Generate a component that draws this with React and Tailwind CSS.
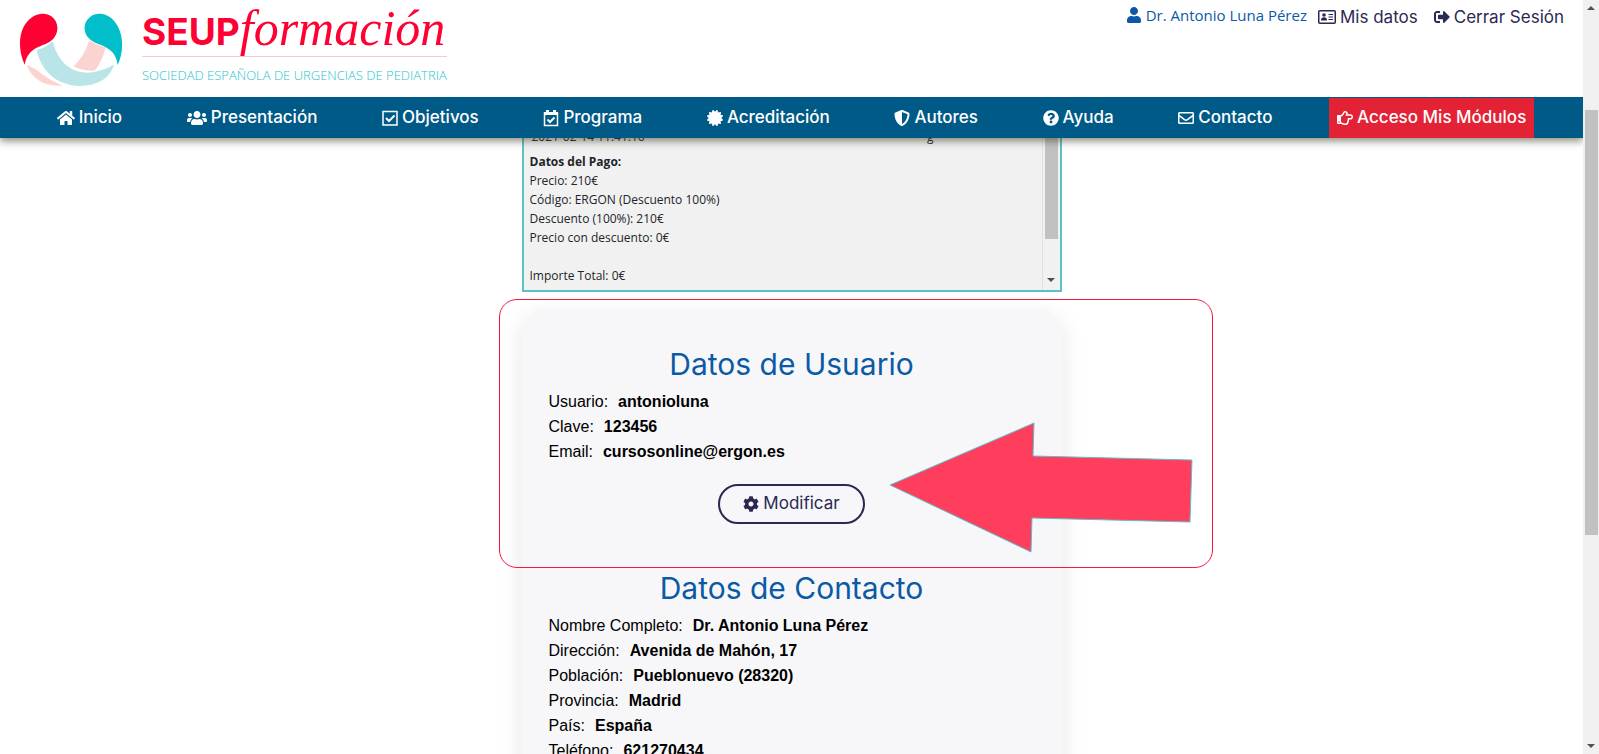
import React from 'react';
import {
  FaHome, FaUsers, FaCertificate, FaShieldAlt, FaQuestionCircle,
  FaRegEnvelope, FaRegHandPointRight, FaUser, FaSignOutAlt, FaCog,
} from 'react-icons/fa';

// iconos de esquinas rectas
const IconoCheck = ({ className }) => (
  <svg viewBox="0 0 16 16" fill="none" stroke="currentColor" className={className} aria-hidden="true">
    <path strokeWidth="1.5" d="M1 1.5H15V15H1Z" />
    <path strokeWidth="2" d="M4 8L7 11L12.5 5.5" />
  </svg>
);

const IconoCalendario = ({ className }) => (
  <svg viewBox="0 0 16 18" fill="none" stroke="currentColor" className={className} aria-hidden="true">
    <path strokeWidth="1.5" d="M1.5 4H14.5V16.5H1.5Z" />
    <path fill="currentColor" stroke="none" d="M1 3H3V1H6V3H10V1H13V3H15V6H1Z" />
    <path strokeWidth="2" d="M4.5 10.5L7 13L11.5 8.5" />
  </svg>
);

const IconoFicha = ({ className }) => (
  <svg viewBox="0 0 18 14" fill="none" stroke="currentColor" className={className} aria-hidden="true">
    <rect x="0.75" y="0.75" width="16.5" height="12.5" rx="1" strokeWidth="1.5" />
    <circle cx="6" cy="5" r="1.8" fill="currentColor" stroke="none" />
    <path fill="currentColor" stroke="none" d="M3 10.5C3 8 4 7.2 6 7.2S9 8 9 10.5Z" />
    <path strokeWidth="1.2" d="M10.5 4.5H15M10.5 7H15M10.5 9.5H15" />
  </svg>
);

const menu = [
  { label: 'Inicio', icon: FaHome, size: 'w-[18px] h-[18px]' },
  { label: 'Presentación', icon: FaUsers, size: 'w-5 h-5' },
  { label: 'Objetivos', icon: IconoCheck, size: 'w-4 h-4' },
  { label: 'Programa', icon: IconoCalendario, size: 'w-4 h-[18px]' },
  { label: 'Acreditación', icon: FaCertificate, size: 'w-4 h-4' },
  { label: 'Autores', icon: FaShieldAlt, size: 'w-4 h-4' },
  { label: 'Ayuda', icon: FaQuestionCircle, size: 'w-4 h-4' },
  { label: 'Contacto', icon: FaRegEnvelope, size: 'w-4 h-4' },
  { label: 'Acceso Mis Módulos', icon: FaRegHandPointRight, size: 'w-4 h-4', active: true },
];

const usuario = [
  ['Usuario', 'antonioluna'],
  ['Clave', '123456'],
  ['Email', 'cursosonline@ergon.es'],
];

const contacto = [
  ['Nombre Completo', 'Dr. Antonio Luna Pérez'],
  ['Dirección', 'Avenida de Mahón, 17'],
  ['Población', 'Pueblonuevo (28320)'],
  ['Provincia', 'Madrid'],
  ['País', 'España'],
  ['Teléfono', '621270434'],
];

const Logo = () => (
  <a href="#inicio" className="flex items-start gap-[18px]">
    <svg viewBox="54 36 318 228" className="w-[106px] h-[76px] mt-3" aria-hidden="true">
      <path fill="#fbd3d1" d="M80 195 C88 198 98 203 110 210 C130 226 158 246 190 256 C140 262 96 240 80 195Z" />
      <path fill="#fbd3d1" d="M268 121 Q290 136 317 141 Q308 182 284 212 Q250 214 221 199 Q253 168 268 121Z" />
      <path fill="#b9e5e9" d="M110 150 Q140 142 158 124 C172 178 205 216 258 218 C292 218 322 206 343 193 C330 236 292 258 240 258 C170 256 124 214 110 150Z" />
      <path fill="#ff0033" d="M74 194 C52 148 56 90 84 62 C104 40 136 34 156 50 C178 68 176 98 160 116 C148 130 128 134 110 143 C88 154 78 172 74 194Z" />
      <path fill="#00bfca" d="M353 195 C374 150 370 96 343 64 C324 40 290 34 270 51 C248 68 250 98 266 114 C280 130 302 132 320 143 C342 156 350 172 353 195Z" />
    </svg>
    <span className="flex flex-col">
      <span className="flex items-baseline h-[57px] border-b border-[#fbc9cd] text-[#ff0033] leading-[56px]">
        <span className="font-[Inter] font-bold text-[37px]">SEUP</span>
        <span className="font-['Liberation_Serif',serif] italic text-[50px]">formación</span>
      </span>
      <span className="font-['Open_Sans'] font-light text-[13px] leading-9 text-[#1fc3cc]">SOCIEDAD ESPAÑOLA DE URGENCIAS DE PEDIATRIA</span>
    </span>
  </a>
);

const Datos = ({ titulo, filas }) => (
  <>
    <h2 className="text-center font-[Inter] text-[30px] leading-9 text-[#0b5aa5] mb-[7px]">{titulo}</h2>
    <dl className="font-['Liberation_Sans',sans-serif] text-base leading-[25px] text-black">
      {filas.map(([nombre, valor]) => (
        <div key={nombre} className="flex gap-2.5">
          <dt>{nombre}:</dt>
          <dd className="font-bold">{valor}</dd>
        </div>
      ))}
    </dl>
  </>
);

const Triangulo = ({ abajo }) => (
  <svg viewBox="0 0 8 4" className="w-2 h-1" aria-hidden="true">
    <path fill="#505050" d={abajo ? 'M0 0H8L4 4Z' : 'M0 4H8L4 0Z'} />
  </svg>
);

export default function App() {
  return (
    <div className="h-screen flex overflow-hidden bg-white">
      <div className="flex-1 min-w-0 flex flex-col overflow-hidden">
        <header className="relative z-10 bg-white shadow-[0_3px_8px_rgba(60,60,40,0.6)]">
          <div className="h-[97px] flex justify-between items-start pl-[18px] pr-[19px]">
            <Logo />
            <div className="flex items-start pt-[3px] leading-6 font-[Inter] text-[17px] text-[#2b2954]">
              <span className="flex items-center gap-1 mr-[11px] font-['Open_Sans'] text-[15px] text-[#0b5aa5]">
                <FaUser className="w-4 h-4 text-[#0d57a8]" /> Dr. Antonio Luna Pérez
              </span>
              <a href="#datos" className="flex items-center gap-1 mr-4 pt-0.5"><IconoFicha className="w-[18px] h-3.5" /> Mis datos</a>
              <a href="#salir" className="flex items-center gap-1 pt-0.5"><FaSignOutAlt className="w-4 h-4" /> Cerrar Sesión</a>
            </div>
          </div>
          <nav className="h-[41px] pt-px flex justify-evenly bg-[#005a87] text-white font-[Inter] font-medium text-[17px]">
            {menu.map(({ label, icon: Icon, size, active }) => (
              <a key={label} href="#menu" className={`flex items-center gap-1 px-2 ${active ? 'bg-[#e42236]' : ''}`}>
                <Icon className={size} />
                {label}
              </a>
            ))}
          </nav>
        </header>

        <main className="flex-1 min-h-0 overflow-hidden">
          <div className="w-[540px] max-w-full mx-auto -mt-3">
            {/* resumen del pago */}
            <section className="flex h-[166px] border-2 border-t-0 border-[#5dc1c3] bg-[#f1f1f1]">
              <div className="flex-1 pl-1.5 font-['Open_Sans'] text-[12px] leading-[19px] text-[#212529]">
                <p className="flex justify-between pl-0.5 pr-[108px] pt-px mb-1.5"><span>2021-02-14 11:41:16</span><span>g</span></p>
                <h3 className="font-bold">Datos del Pago:</h3>
                <p>Precio: 210€</p>
                <p>Código: ERGON (Descuento 100%)</p>
                <p>Descuento (100%): 210€</p>
                <p>Precio con descuento: 0€</p>
                <p className="mt-[19px]">Importe Total: 0€</p>
              </div>
              <div className="w-[18px] flex flex-col items-center justify-between pb-2 border-l border-[#e0e0e2]">
                <div className="w-[13px] h-[113px] bg-[#c1c1c1]" />
                <Triangulo abajo />
              </div>
            </section>

            <section className="relative mt-4 px-[27px] pt-[38px] pb-10 rounded-3xl bg-[#f7f7f9] shadow-[0_8px_24px_rgba(0,0,0,0.1)]">
              <Datos titulo="Datos de Usuario" filas={usuario} />
              <div className="flex justify-center mt-5 mb-[46px]">
                <button type="button" className="flex items-center gap-1 h-10 px-[23px] rounded-full border-2 border-[#2b2954] text-[#2b2954] font-[Inter] text-[17px]">
                  <FaCog className="w-4 h-4" /> Modificar
                </button>
              </div>
              <Datos titulo="Datos de Contacto" filas={contacto} />

              {/* recuadro y flecha que señalan el botón */}
              <div className="absolute -left-[23px] -top-[9px] w-[714px] h-[269px] rounded-[18px] border border-[#f5193e] pointer-events-none">
                <svg viewBox="0 0 306 134" className="absolute right-[18px] top-[120px] w-[306px] h-[134px]" aria-hidden="true">
                  <path fill="#ff3e5e" stroke="#5cc0cc" d="M2 65 L146 3 L145 36 L304 40 L302 102 L144 98 L143 132Z" />
                </svg>
              </div>
            </section>
          </div>
        </main>
      </div>

      {/* barra de desplazamiento */}
      <div className="w-4 shrink-0 flex flex-col items-center bg-[#f0f0f0] py-[6px]">
        <Triangulo />
        <div className="w-[13px] h-[425px] mt-[100px] mb-auto bg-[#c1c1c1]" />
        <Triangulo abajo />
      </div>
    </div>
  );
}
